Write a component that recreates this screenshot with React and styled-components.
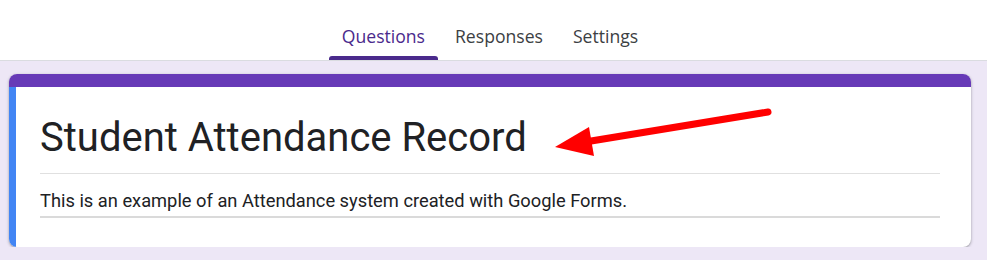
import React from 'react';
import styled, {createGlobalStyle} from 'styled-components';

const GlobalStyle = createGlobalStyle`
    html, body{
        margin: 0;
        padding: 0;
        background-color: #ede7f6;
        font-family: Roboto, "Liberation Sans", sans-serif;
    }
`

const Header = styled.header`
    height: 60px;
    background-color: #ffffff;
    border-bottom: 1px solid #dadce0;
    display: flex;
    justify-content: center;
    padding-right: 7px;
`

const Tab = styled.div`
    position: relative;
    height: 60px;
    padding: 24px 13px 0;
    margin-left: ${props => props.first ? '0' : '4px'};
    box-sizing: border-box;
    font-family: "Open Sans", Roboto, sans-serif;
    font-size: 17.6px;
    line-height: 24px;
    font-weight: 500;
    color: ${props => props.active ? '#4a2a8c' : '#3c4043'};

    &::after{
        content: '';
        display: ${props => props.active ? 'block' : 'none'};
        position: absolute;
        left: 0;
        right: 0;
        bottom: 0;
        height: 4px;
        border-radius: 3px 3px 0 0;
        background-color: #4a2a8c;
    }
`

const Main = styled.main`
    padding: 13px 16px 0 9px;
`

const Card = styled.section`
    width: 962px;
    background-color: #ffffff;
    border-radius: 8px;
    overflow: hidden;
    box-shadow: 0 1px 2px rgba(60, 64, 67, 0.35), 0 1px 3px 1px rgba(60, 64, 67, 0.12);
`

const TopBar = styled.div`
    height: 13px;
    background-color: #673ab7;
`

const Body = styled.div`
    display: flex;
`

const Accent = styled.div`
    width: 7px;
    background-color: #4285f4;
    flex-shrink: 0;
`

const Content = styled.div`
    flex: 1;
    padding: 17px 31px 29px 24px;

    h1{
        margin: 0;
        font-size: 40px;
        font-weight: 400;
        line-height: 68px;
        color: #202124;
        padding-bottom: 1px;
        border-bottom: 1px solid #e0e0e0;
    }

    p{
        margin: 12px 0 0;
        font-size: 18.3px;
        line-height: 30px;
        color: #202124;
        border-bottom: 2px solid #dadada;
    }
`

const Arrow = styled.svg`
    position: absolute;
    left: 0;
    top: 0;
    pointer-events: none;
`

const App = () =>{
    return(
        <>
            <GlobalStyle />
            <Header>
                <Tab first active>Questions</Tab>
                <Tab>Responses</Tab>
                <Tab>Settings</Tab>
            </Header>
            <Main>
                <Card>
                    <TopBar />
                    <Body>
                        <Accent />
                        <Content>
                            <h1>Student Attendance Record</h1>
                            <p>This is an example of an Attendance system created with Google Forms.</p>
                        </Content>
                    </Body>
                </Card>
            </Main>
            <Arrow width="987" height="260" viewBox="0 0 987 260">
                <line x1="768" y1="112" x2="585" y2="142" stroke="#ff0000" strokeWidth="7" strokeLinecap="round" />
                <polygon points="555,147 589,127 594,156" fill="#ff0000" />
            </Arrow>
        </>
    )
}

export default App
